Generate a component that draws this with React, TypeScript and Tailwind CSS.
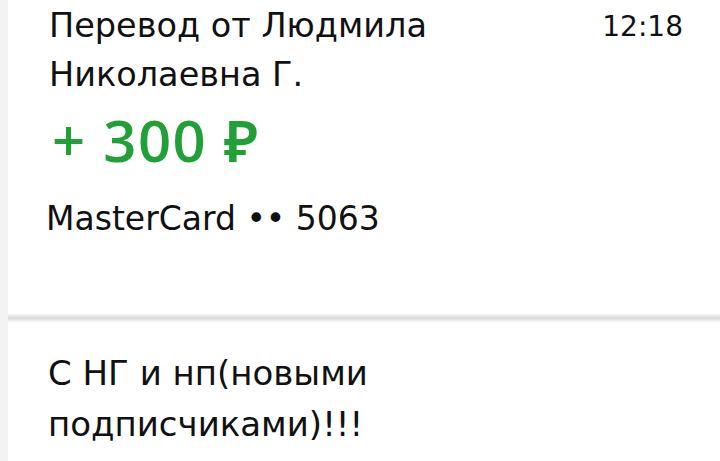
import React from "react";

const dv = { fontFamily: '"DejaVu Sans", "Noto Sans", sans-serif' };
const os = { fontFamily: '"Open Sans", "Noto Sans", sans-serif' };

export default function App() {
  return (
    <div className="w-[720px] h-[461px] overflow-hidden bg-[#f3f3f3] pl-[8px] flex">
      <div className="flex-1 flex flex-col">
        <div className="bg-white h-[314px] pl-[40px] pr-[37px]">
          <div className="flex justify-between items-start">
            <div className="text-[33.5px] leading-[49px] text-[#111] mt-[1px] ml-[1px]" style={dv}>
              Перевод от Людмила
              <br />
              Николаевна Г.
            </div>
            <div className="text-[28px] leading-[49px] text-[#111] mt-[2px]" style={dv}>
              12:18
            </div>
          </div>
          <div
            className="text-[58px] leading-[70px] font-semibold tracking-[1.5px] text-[#21a038] mt-[6px] ml-[4px]"
            style={os}
          >
            + 300 ₽
          </div>
          <div className="text-[33px] leading-[49px] text-[#111] mt-[19px] ml-[-2px]" style={dv}>
            MasterCard •• 5063
          </div>
        </div>
        <div className="h-[8px] bg-gradient-to-b from-[#f7f7f7] via-[#d9d9d9] to-[#f7f7f7]" />
        <div className="flex-1 bg-white pl-[40px] pt-[26px]">
          <div className="text-[34px] leading-[51px] text-[#111]" style={dv}>
            С НГ и нп(новыми
            <br />
            подписчиками)!!!
          </div>
        </div>
      </div>
    </div>
  );
}
